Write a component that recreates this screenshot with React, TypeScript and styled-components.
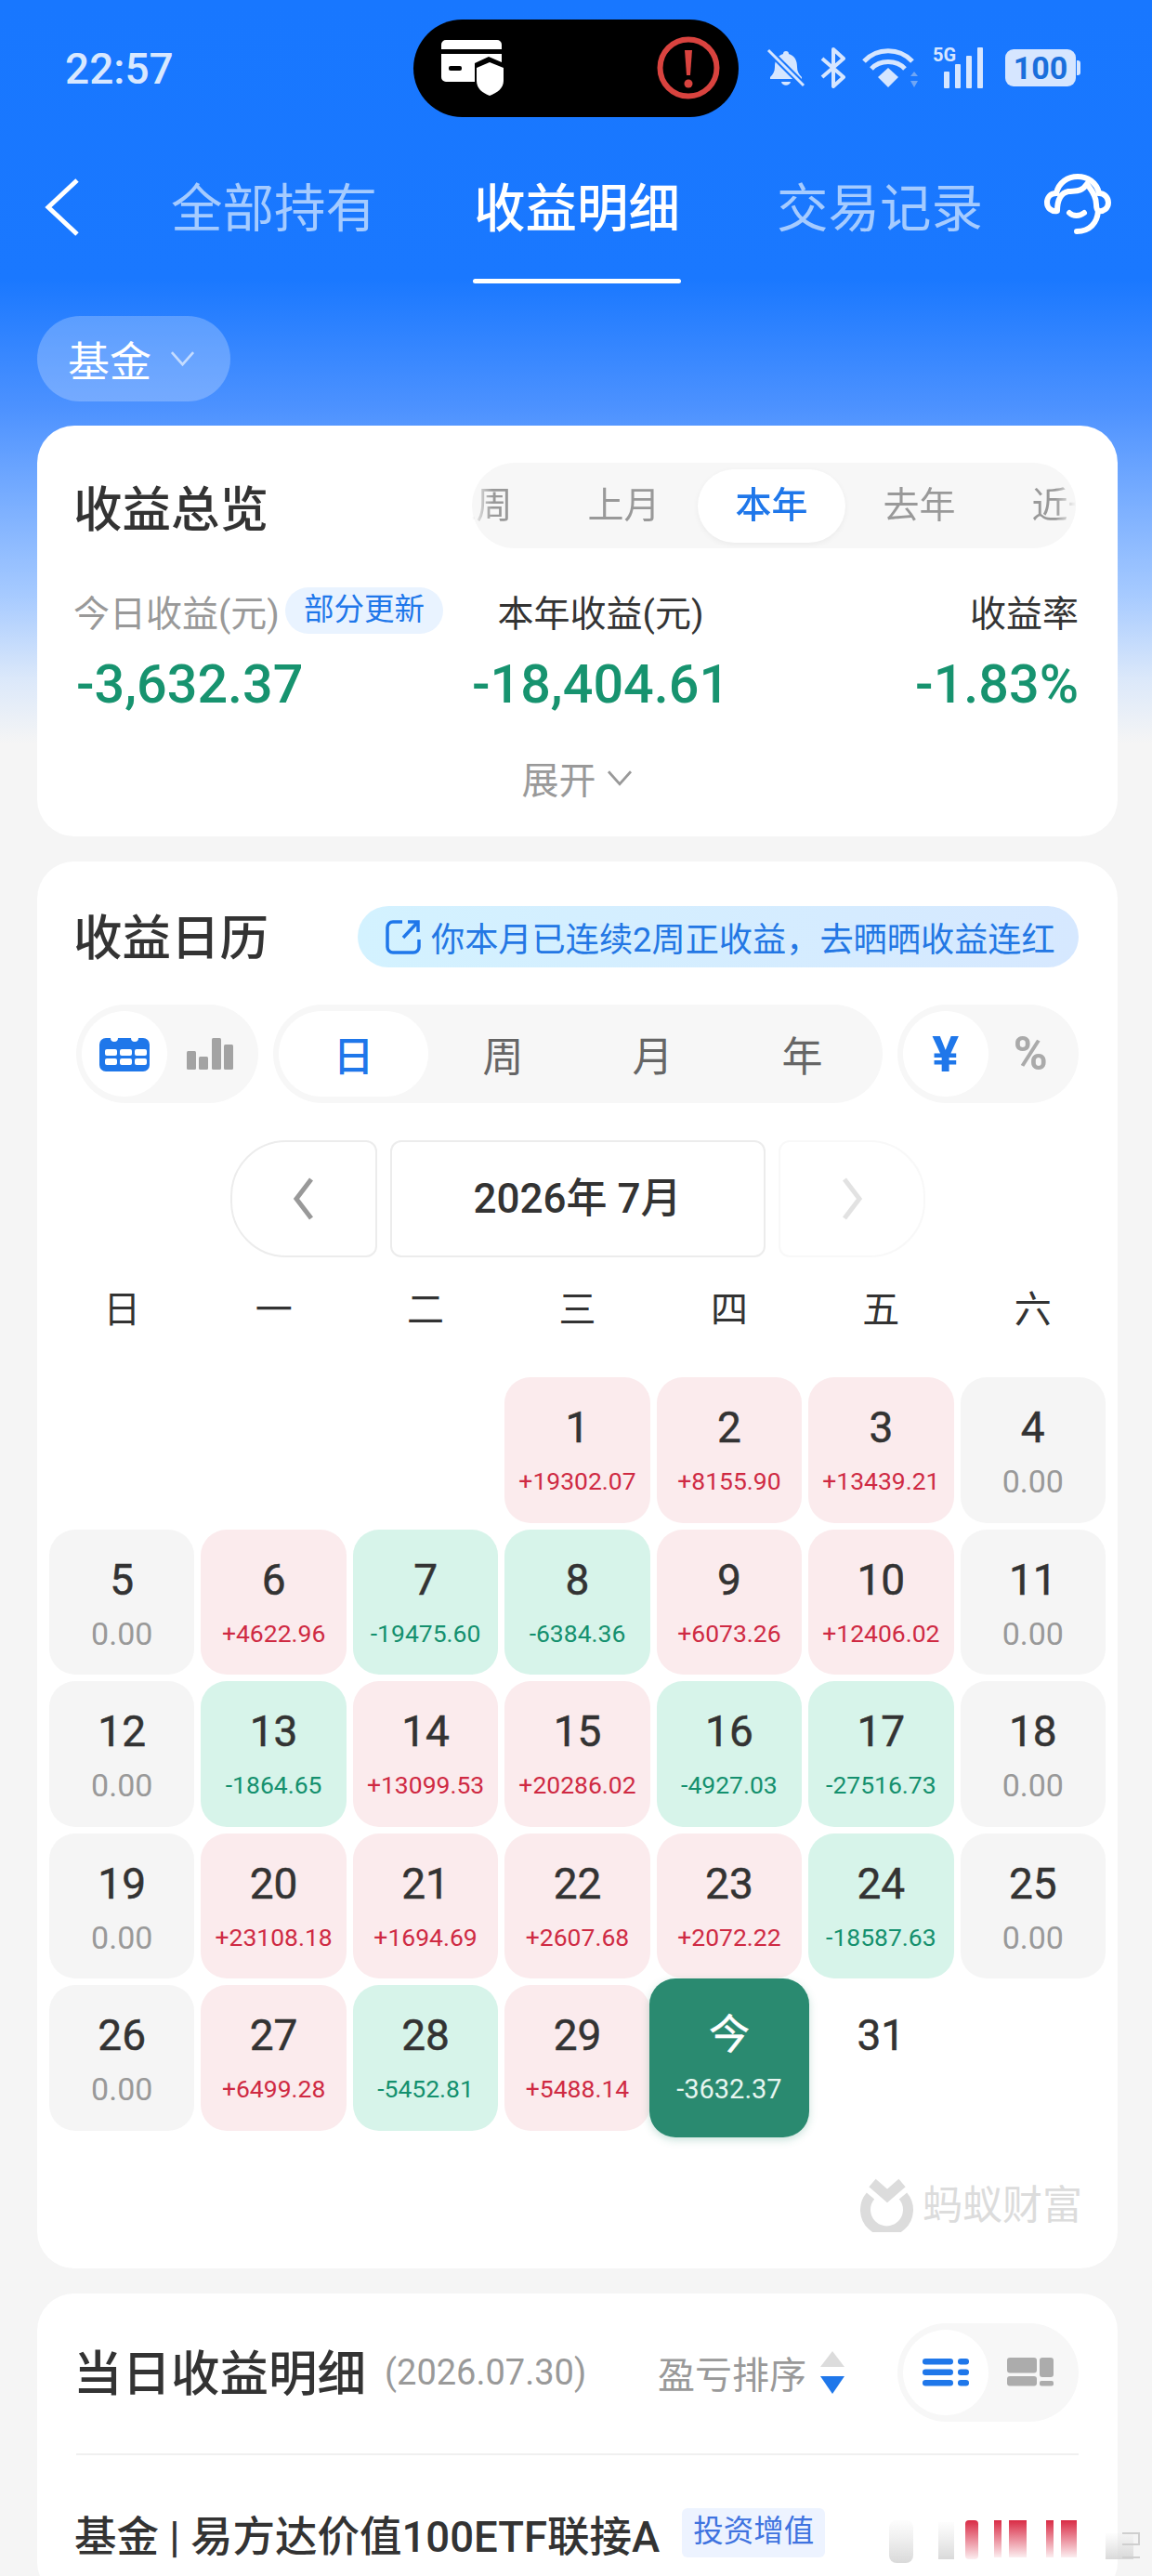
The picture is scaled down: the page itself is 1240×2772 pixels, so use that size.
import React from 'react';
import styled, { createGlobalStyle } from 'styled-components';

const GlobalStyle = createGlobalStyle`
  html, body {
    margin: 0;
    padding: 0;
    background: #f5f5f5;
    font-family: Roboto, "Noto Sans CJK SC", sans-serif;
  }
  * { box-sizing: border-box; }
`;

const BLUE = '#1f77ea';

const Page = styled.div`
  position: relative;
  width: 1240px;
  height: 2772px;
  overflow: hidden;
  background: linear-gradient(
    180deg,
    #1877ff 0,
    #1a78ff 300px,
    #4d92ff 440px,
    #a6caff 640px,
    #dbe8fa 730px,
    #f5f5f5 800px
  );
`;

const StatusBar = styled.div`
  display: flex;
  align-items: center;
  height: 146px;
  padding: 0 0 0 70px;
  color: #d8e8ff;
`;

const Time = styled.div`
  width: 375px;
  padding-top: 2px;
  font-size: 46px;
  font-weight: 500;
`;

const Island = styled.div`
  display: flex;
  align-items: center;
  justify-content: space-between;
  width: 350px;
  height: 105px;
  padding: 0 20px 0 30px;
  border-radius: 53px;
  background: #000;
`;

const StatusIcons = styled.div`
  display: flex;
  align-items: center;
  margin-left: 30px;
`;

const Battery = styled.div`
  position: relative;
  display: flex;
  align-items: center;
  justify-content: center;
  width: 76px;
  height: 40px;
  margin-left: 20px;
  border-radius: 9px;
  background: #d6e6ff;
  color: #1a6fdc;
  font-size: 34px;
  font-weight: 700;
  &::after {
    content: '';
    position: absolute;
    right: -5px;
    top: 12px;
    width: 4px;
    height: 16px;
    border-radius: 0 3px 3px 0;
    background: #d6e6ff;
  }
`;

const Nav = styled.div`
  display: flex;
  align-items: flex-start;
  height: 159px;
  padding-left: 48px;
`;

const BackButton = styled.div`
  display: flex;
  width: 84px;
  padding-top: 46px;
`;

const Tab = styled.div<{ $active?: boolean }>`
  display: flex;
  flex-direction: column;
  align-items: center;
  width: 326px;
  height: 159px;
  padding-top: 6px;
  font-size: 55.5px;
  line-height: 148px;
  font-weight: ${({ $active }) => ($active ? 500 : 400)};
  color: ${({ $active }) => ($active ? '#fff' : '#a5cbff')};
`;

const TabLine = styled.div`
  width: 224px;
  height: 5px;
  border-radius: 3px;
  background: #fff;
`;

const HeadsetButton = styled.div`
  display: flex;
  margin-left: 14px;
  padding-top: 40px;
`;

const FilterPill = styled.div`
  display: flex;
  align-items: center;
  gap: 19px;
  width: 208px;
  height: 92px;
  margin: 35px 0 26px 40px;
  padding-left: 33px;
  border-radius: 46px;
  background: rgba(255, 255, 255, 0.24);
  color: #fff;
  font-size: 45px;
`;

const Card = styled.section`
  width: 1163px;
  margin: 0 0 27px 40px;
  padding: 40px 42px 38px;
  border-radius: 40px;
  background: #fff;
`;

const CardHead = styled.div`
  display: flex;
  align-items: center;
  justify-content: space-between;
`;

const CardTitle = styled.h2<{ $nudge: number }>`
  margin: ${({ $nudge }) => `${$nudge}px 0 ${-$nudge}px -3px`};
  color: #333;
  font-size: 52.5px;
  font-weight: 500;
  line-height: 66px;
  white-space: nowrap;
`;

const PeriodTrack = styled.div`
  width: 650px;
  height: 92px;
  margin-right: 3px;
  border-radius: 46px;
  background: #f7f7f7;
`;

const PeriodWindow = styled.div`
  height: 100%;
  overflow: hidden;
  mask-image: linear-gradient(90deg, transparent, #000 22px, #000 calc(100% - 22px), transparent);
`;

const PeriodRow = styled.div`
  display: flex;
  height: 100%;
  align-items: center;
  margin-left: -75px;
`;

const PeriodItem = styled.div<{ $active?: boolean; $last?: boolean }>`
  flex: none;
  width: ${({ $last }) => ($last ? '180px' : '159px')};
  height: 79px;
  margin-left: ${({ $last }) => ($last ? '10px' : '0')};
  border-radius: 40px;
  text-align: center;
  font-size: 39px;
  line-height: 79px;
  font-weight: ${({ $active }) => ($active ? 500 : 400)};
  color: ${({ $active }) => ($active ? BLUE : '#999')};
  background: ${({ $active }) => ($active ? '#fff' : 'transparent')};
  box-shadow: ${({ $active }) => ($active ? '0 2px 6px rgba(0,0,0,0.05)' : 'none')};
`;

const Stats = styled.div`
  display: grid;
  grid-template-columns: 431px 267px 1fr;
  margin-top: 42px;
`;

const StatColumn = styled.div<{ $align: string }>`
  display: flex;
  flex-direction: column;
  align-items: ${({ $align }) => $align};
`;

const StatLabelRow = styled.div`
  display: flex;
  align-items: center;
  height: 50px;
`;

const StatLabel = styled.span<{ $muted?: boolean }>`
  margin-left: ${({ $muted }) => ($muted ? '-3px' : '0')};
  font-size: 39px;
  white-space: nowrap;
  color: ${({ $muted }) => ($muted ? '#999' : '#333')};
`;

const UpdateBadge = styled.span`
  margin-left: 6px;
  padding: 0 20px;
  height: 50px;
  border-radius: 25px;
  background: #e9f3ff;
  color: ${BLUE};
  font-size: 32.5px;
  line-height: 48px;
  white-space: nowrap;
`;

const StatValue = styled.div`
  margin-top: 20px;
  color: #17936f;
  font-size: 57.5px;
  font-weight: 500;
  line-height: 70px;
`;

const Expand = styled.div`
  display: flex;
  align-items: center;
  justify-content: center;
  gap: 10px;
  height: 50px;
  margin-top: 40px;
  color: #999;
  font-size: 40px;
`;

const Banner = styled.div`
  display: flex;
  align-items: center;
  gap: 11px;
  width: 776px;
  height: 66px;
  padding-left: 30px;
  border-radius: 33px;
  background: linear-gradient(90deg, #d3f2ff, #d6e8ff);
  color: #2377e4;
  font-size: 36.2px;
  white-space: nowrap;
`;

const Controls = styled.div`
  display: flex;
  justify-content: space-between;
  margin-top: 40px;
`;

const Switch = styled.div<{ $columns: number; $width: number }>`
  display: grid;
  flex: none;
  grid-template-columns: repeat(${({ $columns }) => $columns}, 1fr);
  width: ${({ $width }) => $width}px;
  height: 106px;
  padding: 7px 6px;
  border-radius: 53px;
  background: #f7f7f7;
`;

const SwitchItem = styled.div<{ $active?: boolean }>`
  display: flex;
  align-items: center;
  justify-content: center;
  border-radius: 46px;
  font-size: 44px;
  color: ${({ $active }) => ($active ? BLUE : '#666')};
  font-weight: ${({ $active }) => ($active ? 500 : 400)};
  background: ${({ $active }) => ($active ? '#fff' : 'transparent')};
`;

const Symbol = styled.span<{ $active?: boolean }>`
  font-size: ${({ $active }) => ($active ? '54px' : '50px')};
  font-weight: 700;
  color: ${({ $active }) => ($active ? BLUE : '#aaa')};
`;

const MonthNav = styled.div`
  display: flex;
  justify-content: center;
  gap: 14px;
  margin-top: 40px;
`;

const MonthArrow = styled.div<{ $side: 'left' | 'right' }>`
  display: flex;
  align-items: center;
  justify-content: center;
  width: 158px;
  height: 126px;
  border: 2px solid ${({ $side }) => ($side === 'left' ? '#ececec' : '#f8f8f8')};
  border-radius: ${({ $side }) => ($side === 'left' ? '60px 12px 12px 60px' : '12px 60px 60px 12px')};
`;

const MonthLabel = styled.div`
  width: 404px;
  height: 126px;
  border: 2px solid #ececec;
  border-radius: 12px;
  text-align: center;
  color: #333;
  font-size: 44px;
  font-weight: 500;
  line-height: 122px;
`;

const Calendar = styled.div`
  margin: 32px -29px 0;
`;

const Weekdays = styled.div`
  display: grid;
  grid-template-columns: repeat(7, 1fr);
  gap: 7px;
  text-align: center;
  color: #333;
  font-size: 40px;
  line-height: 50px;
`;

const DayGrid = styled.div`
  display: grid;
  grid-template-columns: repeat(7, 1fr);
  grid-auto-rows: 156.5px;
  gap: 7px;
  margin-top: 47px;
`;

const dayBackgrounds = {
  up: '#fbebed',
  down: '#d7f4ea',
  zero: '#f5f5f5',
  today: '#2a8a70',
  none: 'transparent',
};

const dayColors = {
  up: '#cf2a43',
  down: '#14906e',
  zero: '#999',
  today: '#e6f5ef',
  none: '#333',
};

type DayKind = keyof typeof dayBackgrounds;

const valueSizes: Record<DayKind, string> = {
  up: '26.5px',
  down: '26.5px',
  zero: '34px',
  today: '29px',
  none: '26.5px',
};

const DayCell = styled.div<{ $kind: DayKind }>`
  display: flex;
  flex-direction: column;
  align-items: center;
  padding-top: 26px;
  border-radius: 28px;
  background: ${({ $kind }) => dayBackgrounds[$kind]};
  ${({ $kind }) =>
    $kind === 'today' &&
    `
    position: relative;
    margin: -7px -8px;
    padding-top: 33px;
    box-shadow: 0 3px 8px rgba(42, 138, 112, 0.25);
  `}
`;

const DayNumber = styled.div<{ $today?: boolean }>`
  height: 56px;
  color: ${({ $today }) => ($today ? '#fff' : '#333')};
  font-size: ${({ $today }) => ($today ? '44px' : '46px')};
  font-weight: 400;
  line-height: 56px;
  -webkit-text-stroke: 0.5px currentColor;
`;

const DayValue = styled.div<{ $kind: DayKind }>`
  margin-top: 10px;
  color: ${({ $kind }) => dayColors[$kind]};
  font-size: ${({ $kind }) => valueSizes[$kind]};
  line-height: 40px;
  white-space: nowrap;
`;

const Watermark = styled.div`
  display: flex;
  align-items: center;
  justify-content: flex-end;
  gap: 9px;
  margin: 51px -4px 0 0;
  color: #dcdcdc;
  font-size: 43px;
  line-height: 58px;
`;

const DetailHead = styled.div`
  display: flex;
  align-items: center;
`;

const DetailDate = styled.span`
  margin-left: 20px;
  color: #999;
  font-size: 38px;
  white-space: nowrap;
`;

const SortLabel = styled.span`
  margin-left: auto;
  color: #999;
  font-size: 40px;
  white-space: nowrap;
`;

const SortArrows = styled.svg`
  margin: 0 56px 0 14px;
  flex: none;
`;

const Divider = styled.div`
  height: 2px;
  margin-top: 34px;
  background: #f0f0f0;
`;

const FundRow = styled.div`
  display: flex;
  align-items: center;
  margin-top: 51px;
`;

const FundName = styled.span`
  margin-left: -2px;
  color: #333;
  font-size: 45.5px;
  font-weight: 500;
  white-space: nowrap;
`;

const FundTag = styled.span`
  margin-left: 24px;
  padding: 0 12px;
  height: 53px;
  border-radius: 6px;
  background: #edf3ff;
  color: #3f73e0;
  font-size: 32.5px;
  line-height: 51px;
  white-space: nowrap;
`;

const StampOverlay = styled.svg`
  position: absolute;
  left: 950px;
  top: 2706px;
`;

const DetailCard = styled(Card)`
  padding-top: 32px;
  margin-bottom: 0;
`;

const CalendarCard = styled(Card)`
  padding-top: 48px;
  padding-bottom: 39px;
`;

type Day = { label: string; value?: string; kind: DayKind };

const calendarDays: Day[] = [
  { label: '', kind: 'none' },
  { label: '', kind: 'none' },
  { label: '', kind: 'none' },
  { label: '1', value: '+19302.07', kind: 'up' },
  { label: '2', value: '+8155.90', kind: 'up' },
  { label: '3', value: '+13439.21', kind: 'up' },
  { label: '4', value: '0.00', kind: 'zero' },
  { label: '5', value: '0.00', kind: 'zero' },
  { label: '6', value: '+4622.96', kind: 'up' },
  { label: '7', value: '-19475.60', kind: 'down' },
  { label: '8', value: '-6384.36', kind: 'down' },
  { label: '9', value: '+6073.26', kind: 'up' },
  { label: '10', value: '+12406.02', kind: 'up' },
  { label: '11', value: '0.00', kind: 'zero' },
  { label: '12', value: '0.00', kind: 'zero' },
  { label: '13', value: '-1864.65', kind: 'down' },
  { label: '14', value: '+13099.53', kind: 'up' },
  { label: '15', value: '+20286.02', kind: 'up' },
  { label: '16', value: '-4927.03', kind: 'down' },
  { label: '17', value: '-27516.73', kind: 'down' },
  { label: '18', value: '0.00', kind: 'zero' },
  { label: '19', value: '0.00', kind: 'zero' },
  { label: '20', value: '+23108.18', kind: 'up' },
  { label: '21', value: '+1694.69', kind: 'up' },
  { label: '22', value: '+2607.68', kind: 'up' },
  { label: '23', value: '+2072.22', kind: 'up' },
  { label: '24', value: '-18587.63', kind: 'down' },
  { label: '25', value: '0.00', kind: 'zero' },
  { label: '26', value: '0.00', kind: 'zero' },
  { label: '27', value: '+6499.28', kind: 'up' },
  { label: '28', value: '-5452.81', kind: 'down' },
  { label: '29', value: '+5488.14', kind: 'up' },
  { label: '今', value: '-3632.37', kind: 'today' },
  { label: '31', kind: 'none' },
];

const Chevron: React.FC<{ color: string; size?: number }> = ({ color, size = 20 }) => (
  <svg width={size} height={size * 0.6} viewBox="0 0 20 12" fill="none">
    <path d="M2 1.5 L10 10.5 L18 1.5" stroke={color} strokeWidth="1.8" />
  </svg>
);

const CardShieldIcon = () => (
  <svg width="70" height="60" viewBox="0 0 70 60">
    <path
      d="M5 0 H60 a5 5 0 0 1 5 5 V10 H0 V5 a5 5 0 0 1 5 -5 Z M0 15 H65 V24 L51 18 L36 25 V45 H5 a5 5 0 0 1 -5 -5 Z"
      fill="#fff"
    />
    <rect x="8" y="28" width="14" height="5" rx="2" fill="#000" />
    <path d="M52 24 L67 30 V44 C67 52 60 57 52 60 C44 57 38 52 38 44 V30 Z" fill="#fff" />
  </svg>
);

const AlertIcon = () => (
  <svg width="68" height="68" viewBox="0 0 68 68">
    <circle cx="34" cy="34" r="30.5" fill="none" stroke="#d9433f" strokeWidth="6" />
    <path d="M30 15 H38 L36 42 H32 Z" fill="#d9433f" />
    <circle cx="34" cy="51" r="4.5" fill="#d9433f" />
  </svg>
);

const BellOffIcon = () => (
  <svg width="42" height="42" viewBox="0 0 42 42">
    <path
      d="M21 3 a3 3 0 0 1 3 3 c7 2 9 8 9 14 c0 5 2 8 5 11 v2 H4 v-2 c3 -3 5 -6 5 -11 c0 -6 2 -12 9 -14 a3 3 0 0 1 3 -3 Z"
      fill="#d6e6ff"
    />
    <path d="M16 36 H26 C25 41 17 41 16 36 Z" fill="#d6e6ff" />
    <path d="M2 2 L40 40" stroke="#1a78ff" strokeWidth="7" />
    <path d="M2 2 L40 40" stroke="#d6e6ff" strokeWidth="3" />
  </svg>
);

const BluetoothIcon = () => (
  <svg width="30" height="44" viewBox="0 0 30 44" fill="none" style={{ marginLeft: 15 }}>
    <path d="M3 12 L26 32 L15 42 V2 L26 12 L3 32" stroke="#d6e6ff" strokeWidth="4" strokeLinejoin="round" />
  </svg>
);

const WifiIcon = () => (
  <svg width="62" height="44" viewBox="0 0 62 44" fill="none" style={{ marginLeft: 15 }}>
    <path d="M3 15 C17 0 41 0 55 15" stroke="#d6e6ff" strokeWidth="5" />
    <path d="M11 23 C20 13 38 13 47 23" stroke="#d6e6ff" strokeWidth="5" />
    <path d="M29 22 L40 32 L29 43 L18 32 Z" fill="#d6e6ff" />
    <path d="M57 26 L61 31 H53 Z M57 43 L61 36 H53 Z" fill="#6fa6f5" />
  </svg>
);

const SignalLabel = styled.span`
  position: absolute;
  left: 0;
  top: -4px;
  color: #d6e6ff;
  font-size: 20px;
  font-weight: 700;
  line-height: 24px;
`;

const SignalBox = styled.div`
  position: relative;
  width: 58px;
  height: 44px;
  margin-left: 15px;
`;

const SignalIcon = () => (
  <SignalBox>
    <SignalLabel>5G</SignalLabel>
    <svg width="58" height="44" viewBox="0 0 58 44">
      <rect x="12" y="26" width="6" height="18" rx="1" fill="#d6e6ff" />
      <rect x="24" y="18" width="6" height="26" rx="1" fill="#d6e6ff" />
      <rect x="36" y="9" width="6" height="35" rx="1" fill="#d6e6ff" />
      <rect x="48" y="0" width="6" height="44" rx="1" fill="#d6e6ff" />
    </svg>
  </SignalBox>
);

const BackIcon = () => (
  <svg width="38" height="62" viewBox="0 0 38 62" fill="none">
    <path d="M35 2 L4 31 L35 60" stroke="#fff" strokeWidth="5" />
  </svg>
);

const HeadsetIcon = () => (
  <svg width="72" height="68" viewBox="0 0 72 68" fill="none" stroke="#fff" strokeWidth="6" strokeLinecap="round" strokeLinejoin="round">
    <path d="M13 22 C18 -2 54 -2 59 22" />
    <path d="M13 22 C6 22 3 27 3 32 C3 38 8 42 14 41 C14 32 16 22 26 20 C34 19 40 21 46 12 C50 18 56 24 56 34 C56 37 57 40 58 41 C64 42 69 38 69 32 C69 27 65 22 59 22" />
    <path d="M27 43 C31 47 38 47 43 43" />
    <path d="M58 41 C57 54 49 63 35 63" />
  </svg>
);

const ExternalIcon = () => (
  <svg width="38" height="38" viewBox="0 0 38 38" fill="none" stroke={BLUE} strokeWidth="3.5">
    <path d="M18 3 H8 a6 6 0 0 0 -6 6 V30 a6 6 0 0 0 6 6 H30 a6 6 0 0 0 6 -6 V22" />
    <path d="M19 20 L34 4 M24 3 H35 V14" />
  </svg>
);

const CalendarIcon = () => (
  <svg width="54" height="38" viewBox="0 0 54 38">
    <path
      d="M7 2 H12 a4 4 0 0 0 8 0 H34 a4 4 0 0 0 8 0 H47 a7 7 0 0 1 7 7 V31 a7 7 0 0 1 -7 7 H7 a7 7 0 0 1 -7 -7 V9 a7 7 0 0 1 7 -7 Z"
      fill={BLUE}
    />
    {[0, 1, 2].map(col =>
      [0, 1].map(row => (
        <rect key={`${col}-${row}`} x={6 + col * 16} y={14 + row * 10} width="13" height="7" rx="2" fill="#fff" />
      )),
    )}
  </svg>
);

const BarsIcon = () => (
  <svg width="50" height="34" viewBox="0 0 50 34" fill="#a3a3a3">
    <rect x="0" y="14" width="10" height="20" rx="1.5" />
    <rect x="13" y="20" width="10" height="14" rx="1.5" />
    <rect x="27" y="0" width="10" height="34" rx="1.5" />
    <rect x="40" y="7" width="10" height="27" rx="1.5" />
  </svg>
);

const ListIcon = () => (
  <svg width="50" height="30" viewBox="0 0 50 30" fill={BLUE}>
    {[0, 11.5, 23].map(y => (
      <React.Fragment key={y}>
        <rect x="0" y={y} width="33" height="6.5" rx="3.2" />
        <rect x="38" y={y} width="12" height="6.5" rx="3.2" />
      </React.Fragment>
    ))}
  </svg>
);

const BlocksIcon = () => (
  <svg width="50" height="31" viewBox="0 0 50 31" fill="#acacac">
    <rect x="0" y="0" width="32" height="16.5" rx="3" />
    <rect x="35" y="0" width="15" height="21" rx="3" />
    <rect x="0" y="20" width="32" height="10.5" rx="3" />
    <rect x="35" y="25" width="15" height="5.5" rx="2" />
  </svg>
);

const LogoIcon = () => (
  <svg width="58" height="58" viewBox="0 0 58 58" fill="none" stroke="#dcdcdc">
    <path d="M11 19 A 23 23 0 1 0 46 19" strokeWidth="11" />
    <path d="M13 5 L29 19 L45 5" strokeWidth="11" />
  </svg>
);

const ArrowIcon: React.FC<{ color: string; flip?: boolean }> = ({ color, flip }) => (
  <svg width="24" height="46" viewBox="0 0 24 46" fill="none">
    <path d={flip ? 'M4 2 L20 23 L4 44' : 'M20 2 L4 23 L20 44'} stroke={color} strokeWidth="5" />
  </svg>
);

const App: React.FC = () => {
  return (
    <Page>
      <GlobalStyle />
      <StatusBar>
        <Time>22:57</Time>
        <Island>
          <CardShieldIcon />
          <AlertIcon />
        </Island>
        <StatusIcons>
          <BellOffIcon />
          <BluetoothIcon />
          <WifiIcon />
          <SignalIcon />
          <Battery>100</Battery>
        </StatusIcons>
      </StatusBar>

      <Nav>
        <BackButton>
          <BackIcon />
        </BackButton>
        <Tab>全部持有</Tab>
        <Tab $active>
          收益明细
          <TabLine />
        </Tab>
        <Tab>交易记录</Tab>
        <HeadsetButton>
          <HeadsetIcon />
        </HeadsetButton>
      </Nav>

      <FilterPill>
        基金
        <Chevron color="#c5dcff" size={29} />
      </FilterPill>

      <Card>
        <CardHead>
          <CardTitle $nudge={5}>收益总览</CardTitle>
          <PeriodTrack>
            <PeriodWindow>
              <PeriodRow>
                <PeriodItem>上周</PeriodItem>
                <PeriodItem>上月</PeriodItem>
                <PeriodItem $active>本年</PeriodItem>
                <PeriodItem>去年</PeriodItem>
                <PeriodItem $last>近一月</PeriodItem>
              </PeriodRow>
            </PeriodWindow>
          </PeriodTrack>
        </CardHead>
        <Stats>
          <StatColumn $align="flex-start">
            <StatLabelRow>
              <StatLabel $muted>今日收益(元)</StatLabel>
              <UpdateBadge>部分更新</UpdateBadge>
            </StatLabelRow>
            <StatValue>-3,632.37</StatValue>
          </StatColumn>
          <StatColumn $align="center">
            <StatLabelRow>
              <StatLabel>本年收益(元)</StatLabel>
            </StatLabelRow>
            <StatValue>-18,404.61</StatValue>
          </StatColumn>
          <StatColumn $align="flex-end">
            <StatLabelRow>
              <StatLabel>收益率</StatLabel>
            </StatLabelRow>
            <StatValue>-1.83%</StatValue>
          </StatColumn>
        </Stats>
        <Expand>
          展开
          <Chevron color="#999" size={30} />
        </Expand>
      </Card>

      <CalendarCard>
        <CardHead>
          <CardTitle $nudge={2}>收益日历</CardTitle>
          <Banner>
            <ExternalIcon />
            你本月已连续2周正收益，去晒晒收益连红
          </Banner>
        </CardHead>

        <Controls>
          <Switch $columns={2} $width={196}>
            <SwitchItem $active>
              <CalendarIcon />
            </SwitchItem>
            <SwitchItem>
              <BarsIcon />
            </SwitchItem>
          </Switch>
          <Switch $columns={4} $width={656}>
            <SwitchItem $active>日</SwitchItem>
            <SwitchItem>周</SwitchItem>
            <SwitchItem>月</SwitchItem>
            <SwitchItem>年</SwitchItem>
          </Switch>
          <Switch $columns={2} $width={195}>
            <SwitchItem $active>
              <Symbol $active>¥</Symbol>
            </SwitchItem>
            <SwitchItem>
              <Symbol>%</Symbol>
            </SwitchItem>
          </Switch>
        </Controls>

        <MonthNav>
          <MonthArrow $side="left">
            <ArrowIcon color="#999" />
          </MonthArrow>
          <MonthLabel>2026年 7月</MonthLabel>
          <MonthArrow $side="right">
            <ArrowIcon color="#e2e2e2" flip />
          </MonthArrow>
        </MonthNav>

        <Calendar>
          <Weekdays>
            {['日', '一', '二', '三', '四', '五', '六'].map(day => (
              <span key={day}>{day}</span>
            ))}
          </Weekdays>
          <DayGrid>
            {calendarDays.map((day, index) => (
              <DayCell key={index} $kind={day.kind}>
                <DayNumber $today={day.kind === 'today'}>{day.label}</DayNumber>
                {day.value && <DayValue $kind={day.kind}>{day.value}</DayValue>}
              </DayCell>
            ))}
          </DayGrid>
        </Calendar>

        <Watermark>
          <LogoIcon />
          蚂蚁财富
        </Watermark>
      </CalendarCard>

      <DetailCard>
        <DetailHead>
          <CardTitle $nudge={2}>当日收益明细</CardTitle>
          <DetailDate>(2026.07.30)</DetailDate>
          <SortLabel>盈亏排序</SortLabel>
          <SortArrows width="28" height="48" viewBox="0 0 28 48">
            <path d="M14 1 L27 18 H1 Z" fill="#dcdcdc" />
            <path d="M1 28 H27 L14 47 Z" fill={BLUE} />
          </SortArrows>
          <Switch $columns={2} $width={195}>
            <SwitchItem $active>
              <ListIcon />
            </SwitchItem>
            <SwitchItem>
              <BlocksIcon />
            </SwitchItem>
          </Switch>
        </DetailHead>
        <Divider />
        <FundRow>
          <FundName>基金 | 易方达价值100ETF联接A</FundName>
          <FundTag>投资增值</FundTag>
        </FundRow>
      </DetailCard>

      <StampOverlay width="290" height="60" viewBox="0 0 290 60">
        <defs>
          <linearGradient id="stampRed" x1="0" y1="0" x2="0" y2="1">
            <stop offset="0" stopColor="#d92b45" />
            <stop offset="1" stopColor="#d92b45" stopOpacity="0.08" />
          </linearGradient>
          <linearGradient id="stampGrey" x1="0" y1="0" x2="0" y2="1">
            <stop offset="0" stopColor="#d8d8d8" stopOpacity="0.05" />
            <stop offset="1" stopColor="#d0d0d0" stopOpacity="0.8" />
          </linearGradient>
        </defs>
        <rect x="7" y="6" width="26" height="46" rx="8" fill="url(#stampGrey)" />
        <rect x="60" y="8" width="17" height="40" fill="url(#stampGrey)" />
        <rect x="89" y="6" width="14" height="42" rx="4" fill="url(#stampRed)" />
        <rect x="120" y="6" width="8" height="40" fill="url(#stampRed)" />
        <rect x="136" y="6" width="19" height="40" fill="url(#stampRed)" />
        <rect x="176" y="6" width="8" height="40" fill="url(#stampRed)" />
        <rect x="192" y="6" width="17" height="40" fill="url(#stampRed)" />
        <rect x="240" y="20" width="30" height="28" fill="url(#stampGrey)" />
        <path d="M258 20 H276 V32 H258 M258 46 H277" fill="none" stroke="#cfcfcf" strokeWidth="2" />
      </StampOverlay>
    </Page>
  );
};

export default App;
